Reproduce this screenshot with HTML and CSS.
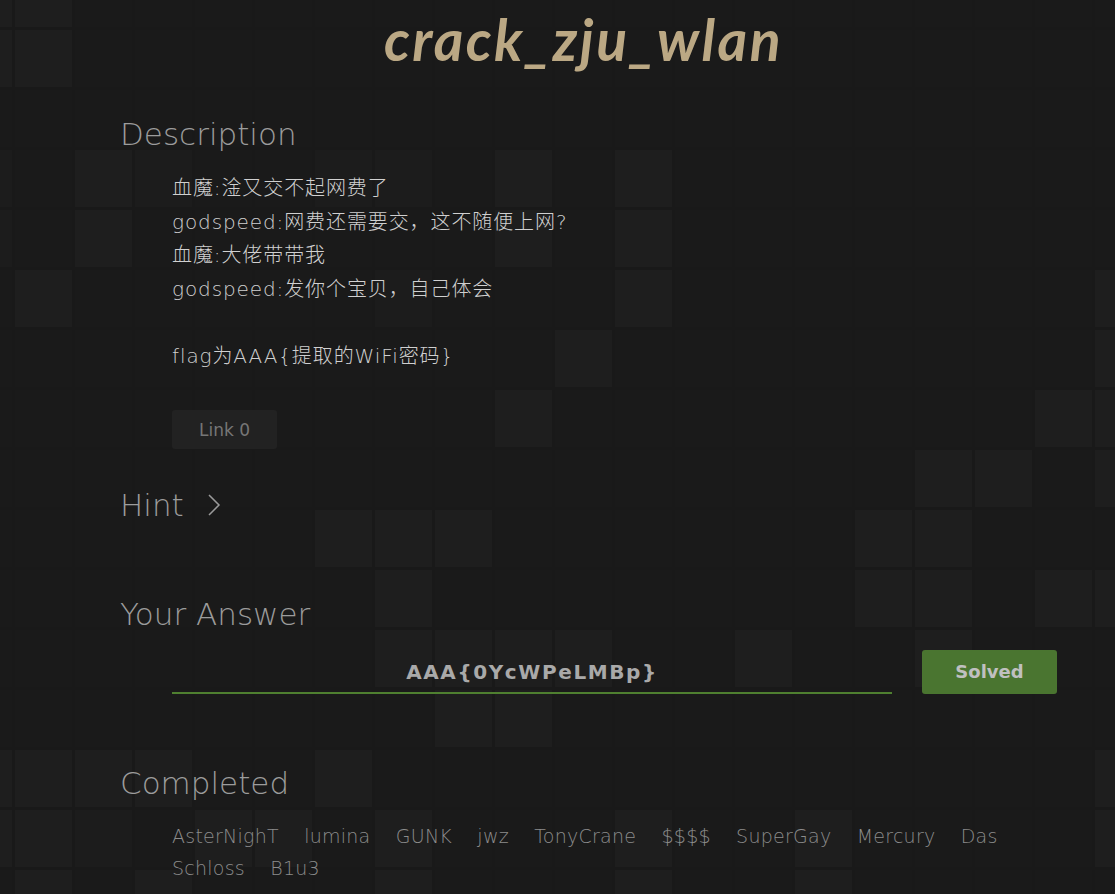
FILE: index.html
```html
<!DOCTYPE html>
<html lang="zh">
<head>
<meta charset="utf-8">
<title>crack_zju_wlan</title>
<link rel="stylesheet" href="styles.css">
</head>
<body>
<div class="tiles" aria-hidden="true">
<i class="l"></i><i class="l"></i><i></i><i></i><i></i><i></i><i></i><i></i><i></i><i></i><i></i><i></i><i></i><i></i><i></i><i></i><i></i><i></i><i></i><i></i>
<i class="l"></i><i class="l"></i><i></i><i></i><i></i><i></i><i></i><i></i><i></i><i></i><i></i><i></i><i></i><i></i><i></i><i></i><i></i><i></i><i></i><i></i>
<i></i><i></i><i></i><i></i><i></i><i></i><i></i><i></i><i></i><i></i><i></i><i></i><i></i><i></i><i></i><i></i><i></i><i></i><i></i><i></i>
<i class="m"></i><i></i><i class="l"></i><i class="m"></i><i></i><i></i><i class="m"></i><i class="m"></i><i></i><i class="l"></i><i></i><i class="l"></i><i></i><i></i><i></i><i></i><i></i><i></i><i></i><i></i>
<i class="m"></i><i></i><i class="l"></i><i></i><i></i><i></i><i></i><i></i><i></i><i class="l"></i><i></i><i class="l"></i><i></i><i></i><i></i><i></i><i></i><i></i><i></i><i></i>
<i></i><i class="l"></i><i></i><i></i><i></i><i></i><i></i><i class="m"></i><i></i><i></i><i></i><i class="l"></i><i></i><i></i><i></i><i></i><i></i><i></i><i></i><i class="l"></i>
<i></i><i></i><i></i><i></i><i></i><i></i><i></i><i></i><i></i><i></i><i class="l"></i><i></i><i></i><i></i><i></i><i></i><i></i><i></i><i></i><i class="l"></i>
<i></i><i></i><i></i><i></i><i></i><i></i><i></i><i></i><i></i><i class="l"></i><i></i><i></i><i></i><i></i><i></i><i></i><i></i><i></i><i class="l"></i><i class="l"></i>
<i></i><i></i><i></i><i></i><i></i><i></i><i></i><i></i><i></i><i></i><i></i><i></i><i></i><i></i><i></i><i></i><i class="l"></i><i class="l"></i><i></i><i class="l"></i>
<i></i><i></i><i></i><i></i><i></i><i></i><i class="l"></i><i class="l"></i><i class="l"></i><i></i><i></i><i></i><i></i><i></i><i></i><i class="l"></i><i class="l"></i><i></i><i></i><i></i>
<i></i><i></i><i></i><i></i><i></i><i></i><i></i><i class="l"></i><i></i><i></i><i></i><i></i><i></i><i></i><i></i><i class="l"></i><i class="l"></i><i></i><i class="l"></i><i class="l"></i>
<i></i><i></i><i></i><i></i><i></i><i></i><i></i><i class="l"></i><i class="l"></i><i class="l"></i><i class="l"></i><i></i><i></i><i class="l"></i><i></i><i></i><i class="l"></i><i></i><i></i><i></i>
<i></i><i></i><i></i><i></i><i></i><i></i><i></i><i></i><i class="l"></i><i class="l"></i><i></i><i></i><i></i><i></i><i></i><i></i><i></i><i></i><i></i><i></i>
<i class="l"></i><i class="l"></i><i class="l"></i><i class="l"></i><i></i><i></i><i class="l"></i><i></i><i></i><i></i><i></i><i></i><i></i><i></i><i></i><i></i><i></i><i></i><i></i><i class="l"></i>
<i class="l"></i><i class="l"></i><i class="m"></i><i></i><i class="l"></i><i class="l"></i><i></i><i class="l"></i><i></i><i></i><i></i><i class="l"></i><i></i><i></i><i class="l"></i><i></i><i></i><i></i><i></i><i class="l"></i>
<i></i><i class="l"></i><i></i><i class="l"></i><i></i><i></i><i></i><i class="l"></i><i></i><i></i><i></i><i class="l"></i><i></i><i></i><i class="l"></i><i></i><i></i><i></i><i></i><i></i>
</div>

<main class="page">
  <h1 class="title">crack_zju_wlan</h1>

  <section class="sec sec-desc">
    <h2 class="head">Description</h2>
    <div class="body">
      <p class="desc">血魔:淦又交不起网费了<br>godspeed:网费还需要交，这不随便上网?<br>血魔:大佬带带我<br>godspeed:发你个宝贝，自己体会<br><br>flag为AAA{提取的WiFi密码}</p>
      <a class="link" href="#">Link 0</a>
    </div>
  </section>

  <section class="sec sec-hint">
    <h2 class="head hint">Hint
      <svg class="chev" width="14" height="24" viewBox="0 0 14 24"><polyline points="2,2 12,12 2,22" fill="none" stroke="#9a9a9a" stroke-width="1.5"/></svg>
    </h2>
  </section>

  <section class="sec sec-answer">
    <h2 class="head">Your Answer</h2>
    <div class="body answer">
      <div class="field">AAA{0YcWPeLMBp}</div>
      <button class="solved">Solved</button>
    </div>
  </section>

  <section class="sec sec-done">
    <h2 class="head">Completed</h2>
    <p class="body names">AsterNighT lumina GUNK jwz TonyCrane $$$$ SuperGay Mercury Das Schloss B1u3</p>
  </section>
</main>
</body>
</html>
```

FILE: styles.css
```css
html, body {
  margin: 0;
  padding: 0;
  background: #191919;
  height: 100%;
  overflow: hidden;
}

body {
  font-family: "DejaVu Sans", "Noto Sans CJK SC", sans-serif;
  font-weight: 200;
  color: #cfcfcf;
  position: relative;
}

.tiles {
  position: absolute;
  left: -45px;
  top: -30px;
  display: grid;
  grid-template-columns: repeat(20, 57px);
  grid-auto-rows: 57px;
  gap: 3px;
  z-index: 0;
}

.tiles i {
  display: block;
  background: #1a1a1a;
}

.tiles i.l {
  background: #1e1e1e;
}

.tiles i.m {
  background: #1c1c1c;
}

.page {
  position: relative;
  z-index: 1;
  margin-left: 120px;
  width: 940px;
}

.title {
  margin: 0;
  padding: 6px 13px 0 0;
  text-align: center;
  font-family: "Lato", sans-serif;
  font-style: italic;
  font-weight: 700;
  font-size: 57px;
  line-height: 66px;
  letter-spacing: 2.4px;
  color: #bba884;
}

.head {
  margin: 0;
  font-family: "DejaVu Sans", sans-serif;
  font-weight: 200;
  font-size: 31px;
  line-height: 40px;
  color: #9c9c9c;
}

.sec-desc {
  padding-top: 42px;
}

.body {
  padding-left: 52px;
}

.desc {
  margin: 18px 0 0;
  font-size: 20px;
  line-height: 33.6px;
  letter-spacing: 0.9px;
  color: #d0d0d0;
}

.link {
  display: inline-block;
  margin-top: 36px;
  width: 105px;
  height: 39px;
  line-height: 41px;
  text-align: center;
  background: #222222;
  border-radius: 3px;
  color: #767676;
  font-weight: 400;
  font-size: 17px;
  text-decoration: none;
}

.sec-hint {
  padding-top: 36px;
}

.hint {
  display: flex;
  align-items: center;
  gap: 23px;
}

.chev {
  display: block;
}

.sec-answer {
  padding-top: 69px;
}

.answer {
  display: flex;
  align-items: flex-end;
  gap: 30px;
  margin-top: 16px;
}

.field {
  flex: 0 0 720px;
  height: 42px;
  border-bottom: 2px solid #4f8030;
  text-align: center;
  font-weight: 700;
  font-size: 20px;
  line-height: 45px;
  letter-spacing: 1.6px;
  color: #a9a9a9;
}

.solved {
  flex: 0 0 135px;
  height: 44px;
  border: 0;
  border-radius: 3px;
  background: #4a7530;
  color: #c0c0c0;
  font-family: "DejaVu Sans", sans-serif;
  font-weight: 700;
  font-size: 18px;
  padding: 0;
}

.sec-done {
  padding-top: 69px;
}

.names {
  margin: 17px 0 0;
  font-size: 19px;
  line-height: 32px;
  letter-spacing: 0.25px;
  word-spacing: 19px;
  color: #8c8c8c;
  width: 860px;
}
```
